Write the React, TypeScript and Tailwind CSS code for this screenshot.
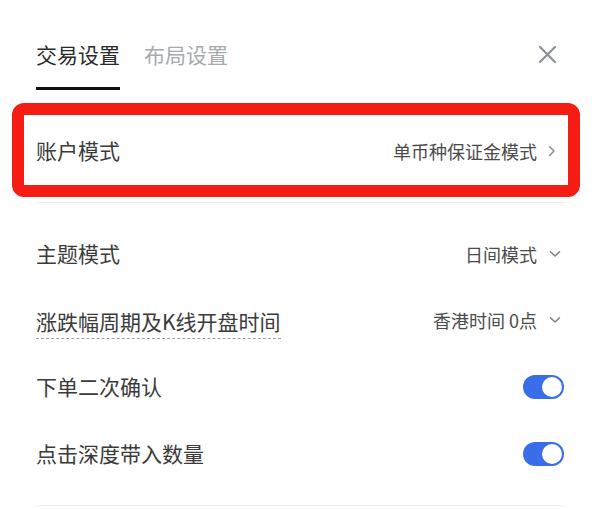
import { useState } from "react";

const FONT = '"Noto Sans CJK SC", "Noto Sans", "Liberation Sans", sans-serif';

function ChevronRight() {
  return (
    <svg width="8" height="12" viewBox="0 0 8 12" fill="none" className="shrink-0">
      <path d="M1.5 1.5 6 6l-4.5 4.5" stroke="#8a8e96" strokeWidth="1.5" strokeLinecap="round" strokeLinejoin="round" />
    </svg>
  );
}

function ChevronDown() {
  return (
    <svg width="12" height="8" viewBox="0 0 12 8" fill="none" className="shrink-0">
      <path d="M1.5 1.8 6 6l4.5-4.2" stroke="#7a7f88" strokeWidth="1.5" strokeLinecap="round" strokeLinejoin="round" />
    </svg>
  );
}

function Toggle({ on, onClick }: { on: boolean; onClick: () => void }) {
  return (
    <button
      onClick={onClick}
      className={`w-[41px] h-[24px] rounded-full p-[2px] flex items-center ${on ? "bg-[#3a6ee8] justify-end" : "bg-[#d5d8de] justify-start"}`}
    >
      <span className="w-[20px] h-[20px] rounded-full bg-white block" />
    </button>
  );
}

export default function App() {
  const [confirm, setConfirm] = useState(true);
  const [depth, setDepth] = useState(true);

  return (
    <div className="w-[600px] h-[509px] bg-white overflow-hidden" style={{ fontFamily: FONT }}>
      <div className="pl-9 pr-9">
        {/* Header tabs */}
        <div className="flex items-start justify-between pt-[39px]">
          <div className="flex gap-6">
            <div className="flex flex-col">
              <span className="text-[21px] leading-[30px] text-[#2a2a2a]">交易设置</span>
              <span className="mt-[18px] h-[3px] bg-[#111] block" />
            </div>
            <span className="text-[21px] leading-[30px] text-[#a6aab0]">布局设置</span>
          </div>
          <button className="mt-[6px] mr-[7px]">
            <svg width="19" height="19" viewBox="0 0 19 19" fill="none">
              <path d="M2 2l15 15M17 2 2 17" stroke="#8a8f98" strokeWidth="2.2" strokeLinecap="round" />
            </svg>
          </button>
        </div>

        {/* 账户模式 — highlighted */}
        <div className="mt-[13px] -ml-6 -mr-4 border-[12px] border-[#f51c14] rounded-[12px] h-[94px] flex items-center justify-between pl-[12px] pr-[12px]">
          <span className="text-[21px] text-[#3a3a3a] pt-[2px]">账户模式</span>
          <div className="flex items-center gap-[11px] pt-[2px]">
            <span className="text-[18px] text-[#4a4a4a]">单币种保证金模式</span>
            <ChevronRight />
          </div>
        </div>

        <div className="mt-[5px] border-t border-[#eef0f2] mr-[-1px]" />

        <div className="py-[18px]">
          <div className="h-[66px] flex items-center justify-between">
            <span className="text-[21px] text-[#3a3a3a]">主题模式</span>
            <div className="flex items-center gap-[12px] pr-[3px]">
              <span className="text-[18px] text-[#4a4a4a]">日间模式</span>
              <ChevronDown />
            </div>
          </div>
          <div className="h-[66px] flex items-center justify-between">
            <span className="text-[21px] text-[#3a3a3a] border-b border-dashed border-[#9a9ea5] pt-[4px] pb-[2px] leading-[30px]">
              涨跌幅周期及K线开盘时间
            </span>
            <div className="flex items-center gap-[12px] pr-[3px]">
              <span className="text-[18px] text-[#4a4a4a]">香港时间 0点</span>
              <ChevronDown />
            </div>
          </div>
          <div className="h-[67px] flex items-center justify-between">
            <span className="text-[21px] text-[#3a3a3a]">下单二次确认</span>
            <Toggle on={confirm} onClick={() => setConfirm(!confirm)} />
          </div>
          <div className="h-[67px] flex items-center justify-between">
            <span className="text-[21px] text-[#3a3a3a]">点击深度带入数量</span>
            <Toggle on={depth} onClick={() => setDepth(!depth)} />
          </div>
        </div>

        <div className="border-t border-[#eef0f2]" />
      </div>
    </div>
  );
}
